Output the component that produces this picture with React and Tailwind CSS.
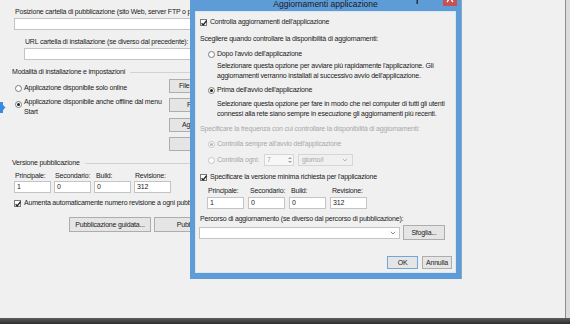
import React from "react";

function Radio({ checked = false, disabled = false }) {
  return (
    <div
      className={`w-[7px] h-[7px] shrink-0 rounded-full border bg-white flex items-center justify-center ${
        disabled ? "border-[#c4c4c4]" : "border-[#7c7c7c]"
      }`}
    >
      {checked && (
        <div className={`w-[3px] h-[3px] rounded-full ${disabled ? "bg-[#b4b4b4]" : "bg-[#1e1e1e]"}`} />
      )}
    </div>
  );
}

function Check({ checked = true }) {
  return (
    <div className="w-[7px] h-[7px] shrink-0 border border-[#7a7a7a] bg-white relative">
      {checked && (
        <svg className="absolute left-[-1px] top-[-1px]" width="8" height="8" viewBox="0 0 8 8">
          <path d="M1.6 4.2 L3.2 5.9 L6.6 1.6" fill="none" stroke="#1e1e1e" strokeWidth="1.3" />
        </svg>
      )}
    </div>
  );
}

function Btn({ w, h = "h-[14px]", children, def = false }) {
  return (
    <div
      className={`${w} ${h} shrink-0 flex items-center justify-center whitespace-nowrap overflow-hidden border bg-[#e5e5e5] ${
        def ? "border-[#6fa6dc]" : "border-[#adadad]"
      }`}
    >
      {children}
    </div>
  );
}

function Box({ className = "", children }) {
  return (
    <div className={`h-[12px] bg-white border border-[#c4c4c4] flex items-center pl-[2px] ${className}`}>
      {children}
    </div>
  );
}

function Chevron({ color = "#7a7a7a" }) {
  return (
    <svg width="6" height="4" viewBox="0 0 6 4">
      <path d="M0.8 0.8 L3 3 L5.2 0.8" fill="none" stroke={color} strokeWidth="0.9" />
    </svg>
  );
}

export default function App() {
  return (
    <div className="relative w-[570px] h-[324px] overflow-hidden bg-[#f0f0f0] font-['Liberation_Sans',Arial,sans-serif] text-[7px] leading-[10px] tracking-[-0.2px] text-[#1b1b1b]">
      <div className="flex h-[318px]">
        {/* main window */}
        <div className="w-[565px] flex flex-col pt-[7px]">
          <div className="pl-[15px] whitespace-nowrap">
            Posizione cartella di pubblicazione (sito Web, server FTP o percorso file):
          </div>
          <Box className="ml-[14px] mt-px w-[420px]" />
          <div className="pl-[25px] mt-[7px] whitespace-nowrap">
            URL cartella di installazione (se diverso dal precedente):
          </div>
          <Box className="ml-[24px] mt-px w-[410px] h-[11px]" />

          <div className="flex items-center mt-[7px] pl-[12px] pr-[120px]">
            <span className="whitespace-nowrap">Modalità di installazione e impostazioni</span>
            <div className="flex-1 h-px bg-[#d2d2d2] ml-[5px]" />
          </div>

          <div className="flex mt-[2px]">
            <div className="w-[169px] pl-[15px] pt-[4px] flex flex-col">
              <div className="flex items-center gap-[2px]">
                <Radio />
                <span className="whitespace-nowrap">Applicazione disponibile solo online</span>
              </div>
              <div className="flex items-start gap-[2px] mt-[4px]">
                <div className="mt-[4px]">
                  <Radio checked />
                </div>
                <span className="whitespace-nowrap">
                  Applicazione disponibile anche offline dal menu
                  <br />
                  Start
                </span>
              </div>
            </div>
            <div className="flex flex-col">
              <Btn w="w-[74px]">File applicazione...</Btn>
              <div className="mt-[5px]">
                <Btn w="w-[74px]">Prerequisiti...</Btn>
              </div>
              <div className="mt-[6px]">
                <Btn w="w-[74px]">Aggiornamenti...</Btn>
              </div>
              <div className="mt-[5px]">
                <Btn w="w-[74px]">Opzioni...</Btn>
              </div>
            </div>
          </div>

          <div className="flex items-center mt-[7px] pl-[12px] pr-[120px]">
            <span className="whitespace-nowrap">Versione pubblicazione</span>
            <div className="flex-1 h-px bg-[#d2d2d2] ml-[5px]" />
          </div>

          <div className="grid grid-cols-[37px_37px_37px_37px] gap-x-[3px] pl-[14px] mt-[3px]">
            <span className="pl-px">Principale:</span>
            <span className="pl-px">Secondario:</span>
            <span className="pl-[2px]">Build:</span>
            <span className="pl-px">Revisione:</span>
            <Box>1</Box>
            <Box>0</Box>
            <Box>0</Box>
            <Box>312</Box>
          </div>

          <div className="flex items-center gap-[3px] pl-[14px] mt-[5px]">
            <Check />
            <span className="whitespace-nowrap">
              Aumenta automaticamente numero revisione a ogni pubblicazione
            </span>
          </div>

          <div className="flex gap-[3px] pl-[69px] mt-[9px]">
            <Btn w="w-[82px]" h="h-[15px]">Pubblicazione guidata...</Btn>
            <Btn w="w-[82px]" h="h-[15px]">Pubblica ora</Btn>
          </div>
        </div>
        <div className="w-px bg-[#8c8c8c]" />
        <div className="flex-1 bg-[#dcdcdc]" />
      </div>
      <div className="h-[6px] bg-gradient-to-b from-[#5e5e5e] to-[#2c2c2c]" />

      {/* blue selection arrow on left edge */}
      <svg className="absolute left-0 top-[102px]" width="6" height="11" viewBox="0 0 6 11">
        <path d="M0 0 H3 V3 L5.5 5.5 L3 8 V11 H0 Z" fill="#3a8be0" />
      </svg>

      {/* dialog window */}
      <div className="absolute left-[190px] top-[-9px] w-[272px] h-[288px] bg-[#5e9cd8] border-r border-[#8aa9c8] flex flex-col">
        <div className="relative h-[20px] flex items-end justify-center pb-[2px]">
          <span className="text-[8.5px] tracking-normal leading-[10px] text-[#1a1a1a] whitespace-nowrap">
            Aggiornamenti applicazione
          </span>
          <svg className="absolute left-[226px] top-[7px]" width="5" height="6" viewBox="0 0 5 6">
            <path d="M1.2 6 V3 Q1.2 1 3.8 1" fill="none" stroke="#222" strokeWidth="1.3" />
          </svg>
          <div className="absolute right-[4px] top-0 w-[14px] h-[15px] bg-[#c75050]">
            <svg width="14" height="15" viewBox="0 0 14 15">
              <path d="M4 3 L10 11 M10 3 L4 11" stroke="#ffffff" strokeWidth="1.3" />
            </svg>
          </div>
        </div>

        <div className="mx-[5px] h-[262px] border border-[#dbe6f2] bg-[#f0f0f0] flex flex-col pl-[4px] pt-[5px]">
          <div className="flex items-center gap-[3px]">
            <Check />
            <span className="whitespace-nowrap">Controlla aggiornamenti dell'applicazione</span>
          </div>
          <div className="mt-[7px] whitespace-nowrap">
            Scegliere quando controllare la disponibilità di aggiornamenti:
          </div>
          <div className="mt-[5px] pl-[8px] flex items-center gap-[2px]">
            <Radio />
            <span className="whitespace-nowrap">Dopo l'avvio dell'applicazione</span>
          </div>
          <div className="mt-[2px] pl-[17px] whitespace-nowrap">
            Selezionare questa opzione per avviare più rapidamente l'applicazione. Gli
            <br />
            aggiornamenti verranno installati al successivo avvio dell'applicazione.
          </div>
          <div className="mt-[4px] pl-[8px] flex items-center gap-[2px]">
            <Radio checked />
            <span className="whitespace-nowrap">Prima dell'avvio dell'applicazione</span>
          </div>
          <div className="mt-[4px] pl-[17px] whitespace-nowrap">
            Selezionare questa opzione per fare in modo che nei computer di tutti gli utenti
            <br />
            connessi alla rete siano sempre in esecuzione gli aggiornamenti più recenti.
          </div>
          <div className="mt-[5px] whitespace-nowrap text-[#a9a9a9]">
            Specificare la frequenza con cui controllare la disponibilità di aggiornamenti:
          </div>
          <div className="mt-[5px] pl-[8px] flex items-center gap-[2px] text-[#a9a9a9]">
            <Radio checked disabled />
            <span className="whitespace-nowrap">Controlla sempre all'avvio dell'applicazione</span>
          </div>
          <div className="mt-[5px] pl-[8px] h-[12px] flex items-center text-[#a9a9a9]">
            <Radio disabled />
            <span className="ml-[2px] w-[47px] whitespace-nowrap">Controlla ogni:</span>
            <div className="w-[30px] h-[12px] border border-[#d6d6d6] bg-[#f7f7f7] flex items-center justify-between pl-[2px]">
              <span>7</span>
              <div className="flex flex-col items-center justify-center gap-[2px] w-[6px] h-full">
                <svg width="4" height="2" viewBox="0 0 4 2">
                  <path d="M0 2 L2 0 L4 2 Z" fill="#a0a0a0" />
                </svg>
                <svg width="4" height="2" viewBox="0 0 4 2">
                  <path d="M0 0 L2 2 L4 0 Z" fill="#a0a0a0" />
                </svg>
              </div>
            </div>
            <div className="ml-[4px] w-[55px] h-[12px] border border-[#d6d6d6] bg-[#f0f0f0] flex items-center justify-between pl-[3px] pr-[4px]">
              <span>giorno/i</span>
              <Chevron color="#b0b0b0" />
            </div>
          </div>
          <div className="mt-[6px] flex items-center gap-[3px]">
            <Check />
            <span className="whitespace-nowrap">
              Specificare la versione minima richiesta per l'applicazione
            </span>
          </div>
          <div className="mt-[4px] pl-[7px] grid grid-cols-[37px_37px_37px_37px] gap-x-[4px]">
            <span className="pl-px">Principale:</span>
            <span className="pl-[2px]">Secondario:</span>
            <span className="pl-[2px]">Build:</span>
            <span className="pl-[2px]">Revisione:</span>
            <Box className="mt-px">1</Box>
            <Box className="mt-px">0</Box>
            <Box className="mt-px">0</Box>
            <Box className="mt-px">312</Box>
          </div>
          <div className="mt-[5px] whitespace-nowrap">
            Percorso di aggiornamento (se diverso dal percorso di pubblicazione):
          </div>
          <div className="mt-px flex items-center">
            <div className="ml-[-1px] w-[201px] h-[12px] border border-[#c4c4c4] bg-white flex items-center justify-end pr-[3px]">
              <Chevron />
            </div>
            <div className="ml-[3px]">
              <Btn w="w-[42px]" h="h-[15px]">Sfoglia...</Btn>
            </div>
          </div>
          <div className="mt-[16px] flex justify-end gap-[4px] pr-[3px]">
            <Btn w="w-[31px]" h="h-[13px]" def>OK</Btn>
            <Btn w="w-[30px]" h="h-[13px]">Annulla</Btn>
          </div>
        </div>
      </div>
    </div>
  );
}
